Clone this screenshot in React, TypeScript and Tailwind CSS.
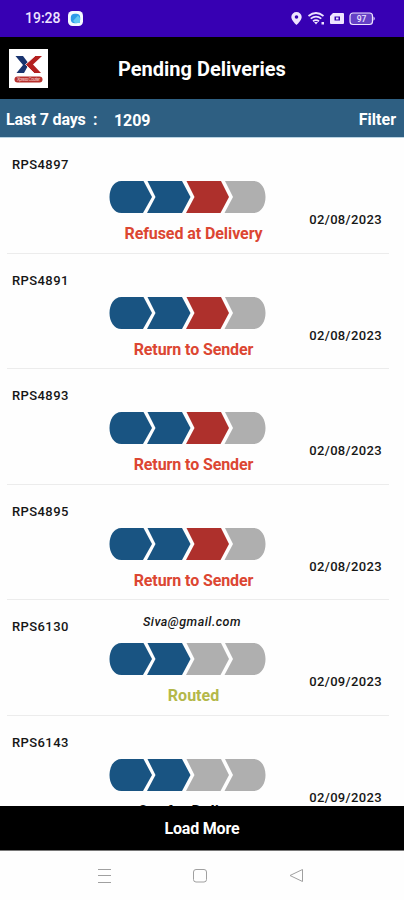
import React from "react";

const BLUE = "#195482";
const RED = "#ae302c";
const GRAY = "#afafaf";

type Delivery = {
  id: string;
  date: string;
  status: string;
  statusClass: string;
  email?: string;
  steps: [string, string];
};

const deliveries: Delivery[] = [
  { id: "RPS4897", date: "02/08/2023", status: "Refused at Delivery", statusClass: "mt-[11px] text-[#dc4632] tracking-[-0.080px]", steps: [RED, GRAY] },
  { id: "RPS4891", date: "02/08/2023", status: "Return to Sender", statusClass: "mt-[11px] text-[#dc4632] tracking-[-0.100px]", steps: [RED, GRAY] },
  { id: "RPS4893", date: "02/08/2023", status: "Return to Sender", statusClass: "mt-[11px] text-[#dc4632] tracking-[-0.100px]", steps: [RED, GRAY] },
  { id: "RPS4895", date: "02/08/2023", status: "Return to Sender", statusClass: "mt-[11px] text-[#dc4632] tracking-[-0.100px]", steps: [RED, GRAY] },
  { id: "RPS6130", date: "02/09/2023", status: "Routed", statusClass: "mt-[11px] text-[#b4b84a]", email: "Siva@gmail.com", steps: [GRAY, GRAY] },
  { id: "RPS6143", date: "02/09/2023", status: "Out for Delivery", statusClass: "mt-[11px] text-black", steps: [GRAY, GRAY] },
];

function Progress({ steps }: { steps: [string, string] }) {
  return (
    <svg className="mr-[12px] block h-8 w-[157px] shrink-0" viewBox="0 0 157 32">
      <path d="M12.500 0H34.500L43 16L34 32H12.500C4.500 32 .5 24 .5 16S4.500 0 12.500 0Z" fill={BLUE} />
      <path d="M38.500 0H73L81.500 16L73 32H38L46.500 16Z" fill={BLUE} />
      <path d="M77.500 0H112L120 16L111.500 32H77L85.500 16Z" fill={steps[0]} />
      <path d="M116 0H144.500C152.500 0 156.500 8 156.500 16S152.500 32 144.500 32H115.500L124 16Z" fill={steps[1]} />
    </svg>
  );
}

function Row({ item }: { item: Delivery }) {
  return (
    <li className="mr-[15px] ml-[7px] flex h-[115.500px] shrink-0 border-b border-[#ececec] text-[13px] font-medium text-[#161616]">
      <div className="w-[102px] pt-[18px] pl-[5px] leading-[18px] tracking-[0.400px]">{item.id}</div>
      <div className="flex w-[169px] flex-col items-center">
        <div className="flex h-[43px] items-start pt-[13px] pr-[3px] text-[12.500px] leading-[18px] whitespace-nowrap italic tracking-[0.500px]">
          {item.email}
        </div>
        <Progress steps={item.steps} />
        <div className={"text-base leading-5 font-bold whitespace-nowrap " + item.statusClass}>{item.status}</div>
      </div>
      <div className="flex-1 pt-[73px] pr-[7px] text-right leading-[18px] tracking-[0.350px]">{item.date}</div>
    </li>
  );
}

function StatusBar() {
  return (
    <div className="flex h-[37px] shrink-0 items-center bg-[#3700b3] pl-[25px] text-[#eee4ff]">
      <span className="text-[14px] font-medium">19:28</span>
      <svg className="ml-[7px] h-[15px] w-[15px]" viewBox="0 0 15 15">
        <rect width="15" height="15" rx="4.500" fill="#f5faff" />
        <rect x="2.800" y="2.800" width="9.400" height="9.400" rx="4" fill="#2e9be8" />
        <path d="M5 10L10 4.500L12 7V12H7Z" fill="#62c9f2" />
      </svg>
      <svg className="ml-auto mr-[28px] h-[15px] w-[86px]" viewBox="0 0 86 15" fill="none">
        <path d="M6.500 1A5.200 5.200 0 0 0 1.300 6C1.300 9.500 6.500 14 6.500 14S11.700 9.500 11.700 6A5.200 5.200 0 0 0 6.500 1ZM6.500 4.200A1.800 1.800 0 1 1 6.500 7.800A1.800 1.800 0 0 1 6.500 4.200Z" fill="currentColor" fillRule="evenodd" />
        <g stroke="currentColor" strokeWidth="1.700">
          <path d="M18.500 5Q26 -1 33.500 5" />
          <path d="M20.700 7.700Q26 3.600 31.300 7.700" />
          <path d="M23 10.200Q26 8 29 10.200" />
        </g>
        <path d="M24 11H28L26 13.500ZM31.500 11H34V13.500H31.500Z" fill="currentColor" />
        <path d="M43 2H53Q54 2 54 3V12Q54 13 53 13H41Q40 13 40 12V5ZM44.500 5.500V9.500H50V5.500Z" fill="currentColor" fillRule="evenodd" />
        <path d="M46 6.500H48.500V8.500H46Z" fill="currentColor" />
        <rect x="60" y="2" width="22.500" height="11.500" rx="3" fill="#6540c6" stroke="currentColor" strokeWidth="1.200" />
        <path d="M83.500 5.500Q86 7.500 83.500 9.800Z" fill="currentColor" />
        <text x="71.500" y="11" textAnchor="middle" fill="currentColor" fontSize="8.500" fontWeight="500">97</text>
      </svg>
    </div>
  );
}

function Logo() {
  return (
    <svg className="h-[39px] w-[39px] shrink-0 bg-white" viewBox="0 0 39 39">
      <path d="M6.500 7H14L20 15L15 24H7.500L14 16Z" fill="#19346f" />
      <path d="M33 7H26L16.500 15.500L25 24H32L24 15.500Z" fill="#b3201f" />
      <path d="M26 7L16.500 15.500L25 24" fill="none" stroke="#fff" strokeWidth=".8" />
      <rect x="5.500" y="27.500" width="28" height="6" rx="3" fill="#b7302d" />
      <text x="19.500" y="32.200" textAnchor="middle" fontSize="4.500" fill="#f2c8c4" textLength="23">Xpress Courier</text>
    </svg>
  );
}

export default function App() {
  return (
    <div className="flex h-[900px] w-[404px] flex-col overflow-hidden bg-[#fefefe] font-['Roboto','Liberation_Sans',sans-serif]">
      <StatusBar />
      <header className="flex h-[62px] shrink-0 items-center bg-black pl-[9px] text-white">
        <Logo />
        <h1 className="ml-[70px] pt-[2px] text-xl font-bold whitespace-nowrap">Pending Deliveries</h1>
      </header>
      <div className="flex h-[39px] shrink-0 items-center border-b border-[#b9d3e2] bg-[#2e5f82] pr-2 pl-[6px] text-base font-bold text-white">
        <span className="w-[108px] pt-[3px] tracking-[-0.200px] whitespace-pre">Last 7 days  :</span>
        <span className="pt-[6px] tracking-[-0.100px]">1209</span>
        <span className="ml-auto pt-[3px]">Filter</span>
      </div>
      <ul className="flex min-h-0 flex-1 flex-col overflow-hidden">
        {deliveries.map((item) => (
          <Row key={item.id} item={item} />
        ))}
      </ul>
      <button className="h-[45px] shrink-0 border-b border-[#777] bg-black pt-[2px] text-base font-bold tracking-[-0.200px] text-white">Load More</button>
      <nav className="flex h-[49px] shrink-0 items-center justify-center">
        <svg className="h-4 w-[208px]" viewBox="0 0 208 16" fill="none" stroke="#a0a0a0" strokeWidth="1">
          <path d="M-1 1.500H13M-1 7.500H13M-1 14.500H13" />
          <rect x="95.500" y="1.500" width="13" height="12.500" rx="2.500" />
          <path d="M204.500 1.500V13.500L192 7.500Z" strokeLinejoin="round" />
        </svg>
      </nav>
    </div>
  );
}
